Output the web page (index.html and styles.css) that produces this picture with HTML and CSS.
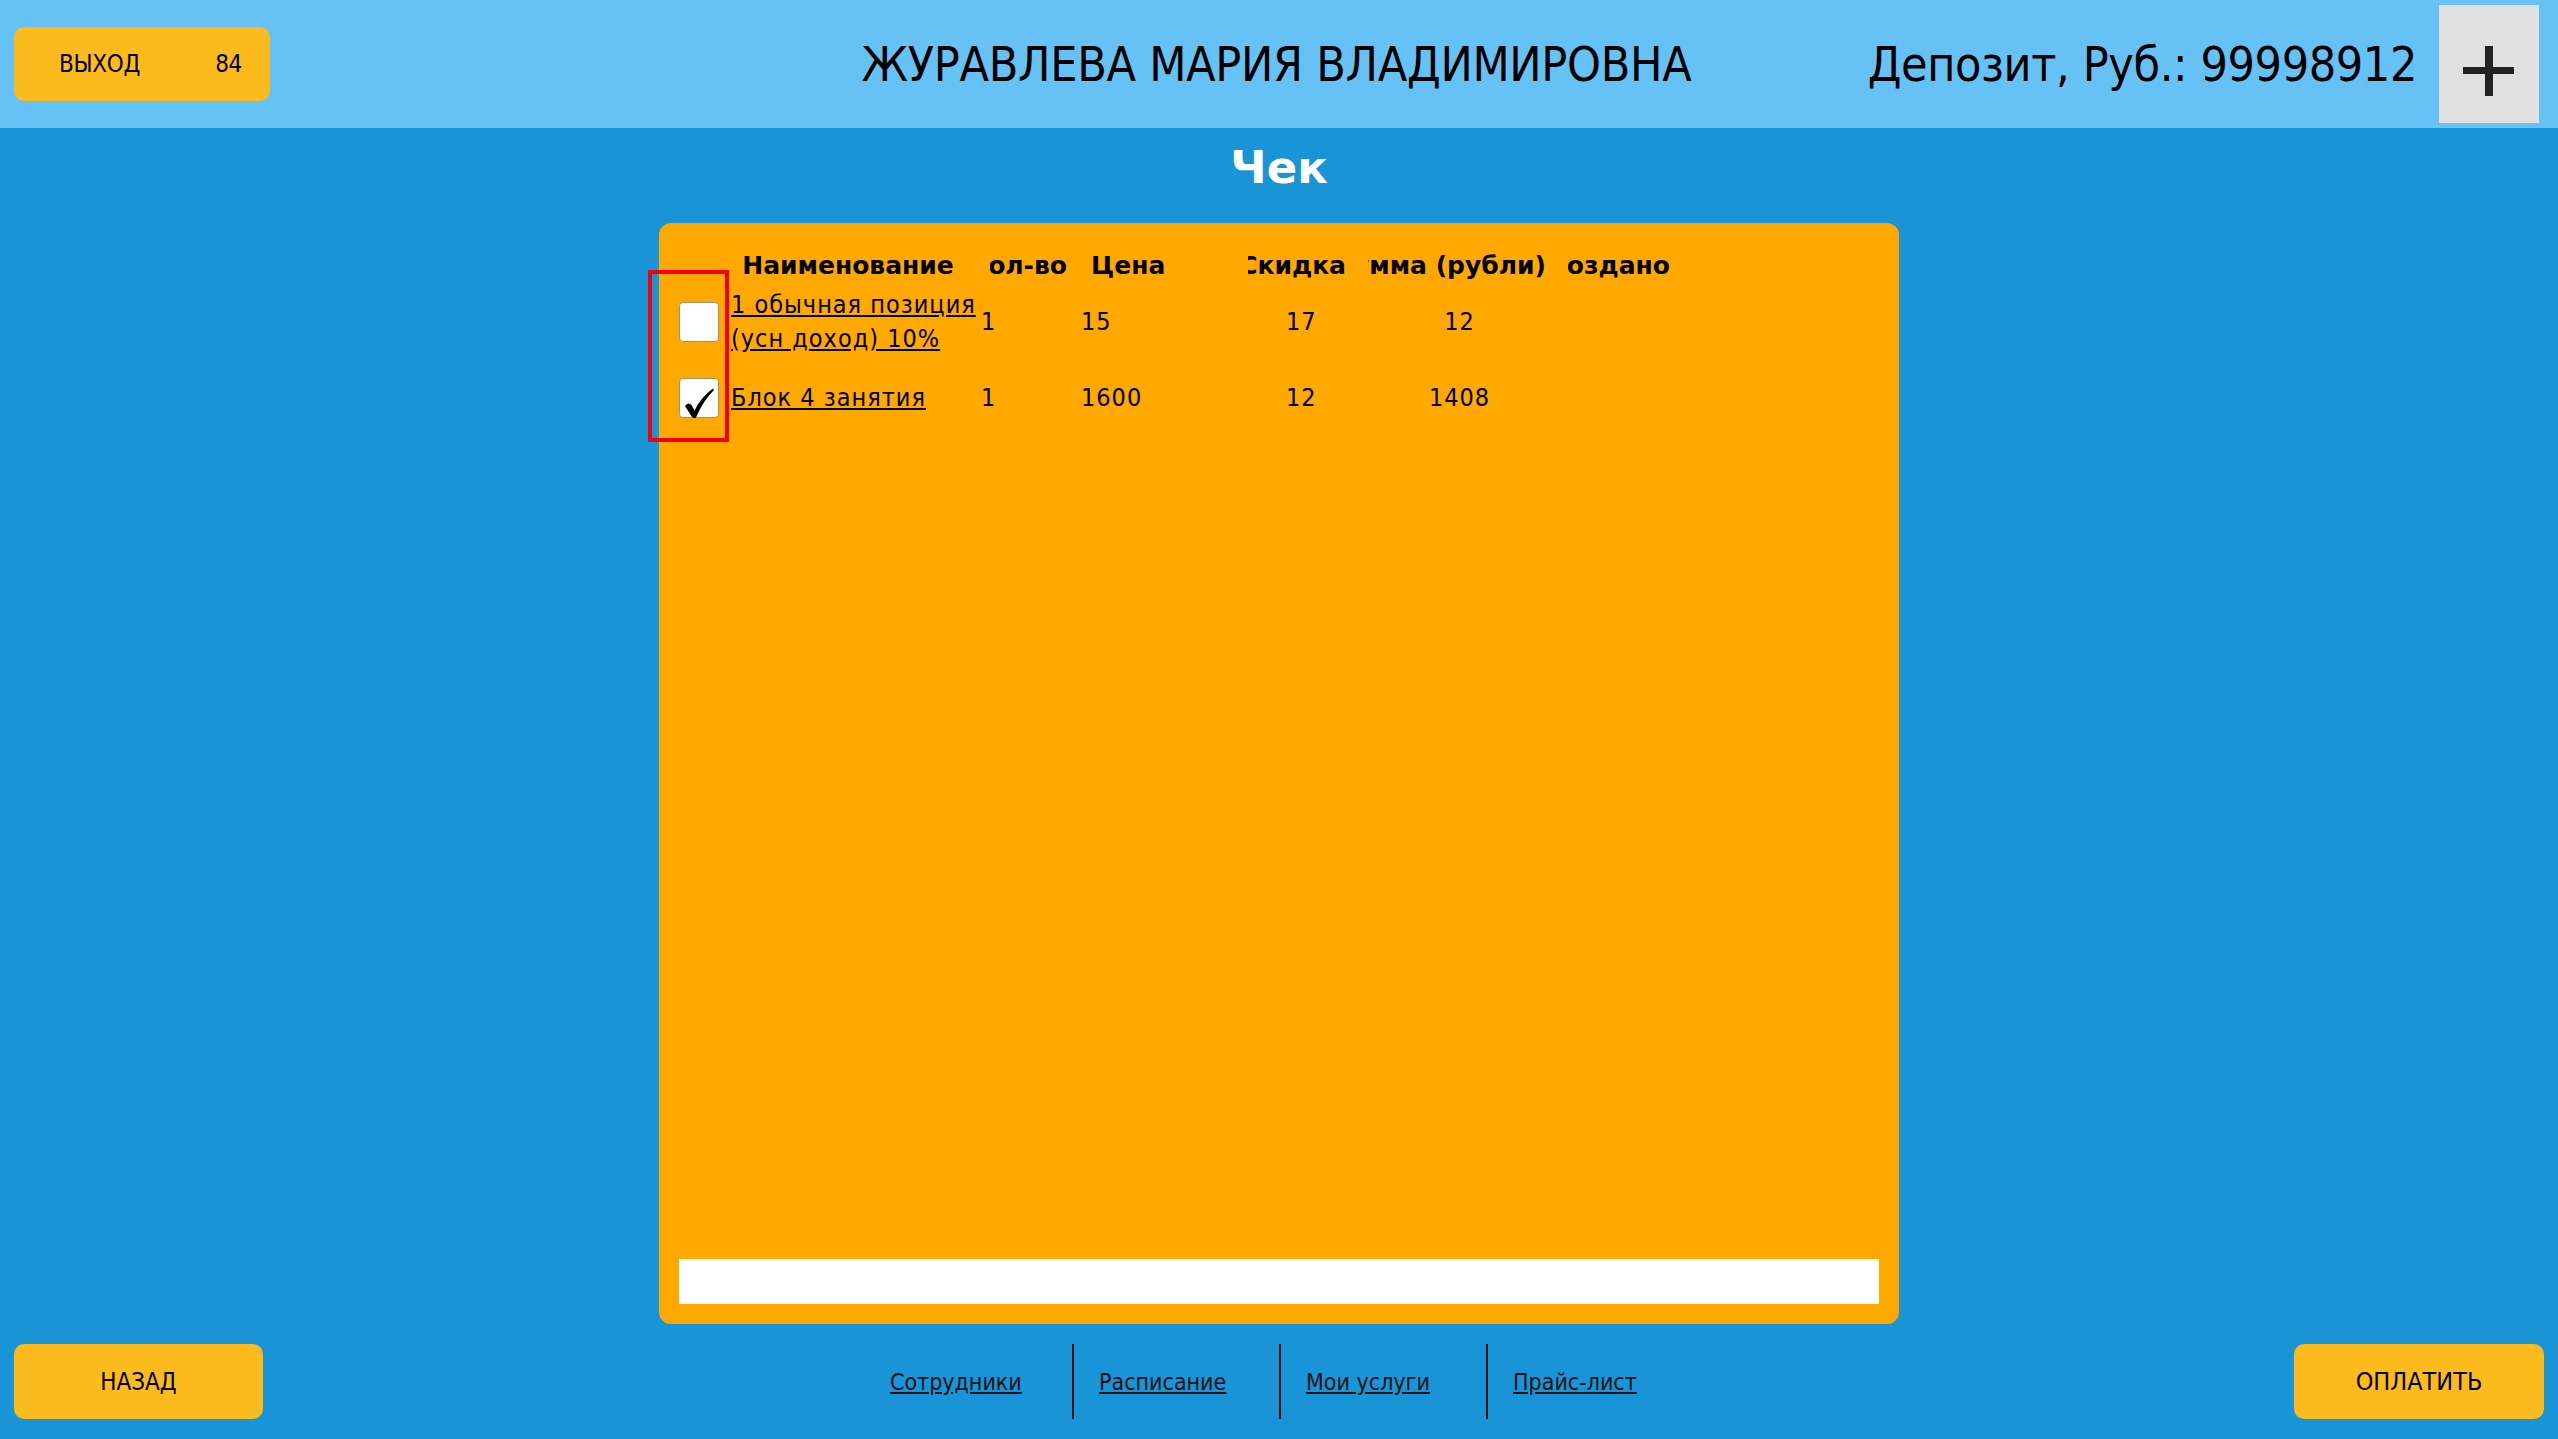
FILE: index.html
```html
<!DOCTYPE html>
<html lang="ru">
    <head>
        <meta charset="UTF-8">
        <meta name="viewport" content="width=device-width, initial-scale=1.0">
        <title>Чек</title>
        <link rel="stylesheet" href="styles.css">
    </head>
    <body>
        <header class="topbar">
            <button class="exit-btn"><span>ВЫХОД</span><span>84</span></button>
            <div class="client-name">ЖУРАВЛЕВА МАРИЯ ВЛАДИМИРОВНА</div>
            <div class="deposit">
                <span class="deposit-text">Депозит, Руб.: <span class="deposit-sum">99998912</span></span>
                <button class="add-btn" title="Пополнить">
                    <svg width="100" height="118" viewBox="0 0 100 118">
                        <rect x="24" y="62" width="51" height="7" fill="#222"/>
                        <rect x="46" y="41" width="8" height="50" fill="#222"/>
                    </svg>
                </button>
            </div>
        </header>

        <main class="content">
            <h1 class="title">Чек</h1>
            <div class="receipt">
                <div class="table">
                    <div class="row head">
                        <div></div>
                        <div class="th th-name">Наименование</div>
                        <div class="th th-qty"><span>Кол-во</span></div>
                        <div class="th th-price">Цена</div>
                        <div class="th th-disc"><span>Скидка</span></div>
                        <div class="th th-sum"><span>Сумма (рубли)</span></div>
                        <div class="th th-created"><span>Создано</span></div>
                    </div>
                    <div class="row item first">
                        <div><span class="check"></span></div>
                        <div class="td"><a href="#">1 обычная позиция (усн доход) 10%</a></div>
                        <div class="td">1</div>
                        <div class="td">15</div>
                        <div class="td td-disc">17</div>
                        <div class="td td-sum">12</div>
                        <div class="td"></div>
                    </div>
                    <div class="row item">
                        <div>
                            <span class="check">
                                <svg width="40" height="40" viewBox="0 0 40 40">
                                    <path d="M6 28 Q9 23.5 12.5 27 L15.5 32.5 Q22 19 34 10.5 L35 12 Q24 23 17.5 38.5 Q15.5 41.5 13 39 Z" fill="#000"/>
                                </svg>
                            </span>
                        </div>
                        <div class="td"><a href="#">Блок 4 занятия</a></div>
                        <div class="td">1</div>
                        <div class="td">1600</div>
                        <div class="td td-disc">12</div>
                        <div class="td td-sum">1408</div>
                        <div class="td"></div>
                    </div>
                    <div class="marker"></div>
                </div>
                <input type="text" class="comment">
            </div>
        </main>

        <footer class="bottombar">
            <div class="left"><button class="btn back-btn">НАЗАД</button></div>
            <nav class="links">
                <a href="#">Сотрудники</a>
                <a href="#">Расписание</a>
                <a href="#">Мои услуги</a>
                <a href="#">Прайс-лист</a>
            </nav>
            <div class="right"><button class="btn pay-btn">ОПЛАТИТЬ</button></div>
        </footer>
    </body>
</html>
```

FILE: styles.css
```css
body {
    margin: 0;
    height: 100vh;
    display: flex;
    flex-direction: column;
    background-color: #1994d6;
    font-family: "DejaVu Sans Condensed", "DejaVu Sans", sans-serif;
    font-stretch: condensed;
    color: #000;
    overflow: hidden;
}
button {
    font-family: inherit;
    font-stretch: inherit;
    color: #000;
    border: none;
    cursor: pointer;
}
a {
    color: #000;
}

/* top bar */
.topbar {
    height: 128px;
    flex-shrink: 0;
    box-sizing: border-box;
    display: grid;
    grid-template-columns: 1fr auto 1fr;
    align-items: center;
    padding: 0 19px 0 14px;
    background-color: #66c1f4;
}
.exit-btn {
    width: 256px;
    height: 74px;
    display: flex;
    justify-content: space-between;
    align-items: center;
    padding: 0 28px 0 45px;
    font-size: 24px;
    letter-spacing: -0.3px;
    background-color: #fbbb1c;
    border-radius: 10px;
}
.client-name {
    font-size: 48px;
    letter-spacing: -0.3px;
}
.deposit {
    display: flex;
    justify-content: flex-end;
    align-items: center;
}
.deposit-text {
    font-size: 48px;
    letter-spacing: -0.4px;
    margin-right: 22px;
}
.add-btn {
    width: 100px;
    height: 118px;
    padding: 0;
    background-color: #e0e0e0;
}
.add-btn svg {
    display: block;
}

/* main */
.content {
    flex: 1;
    min-height: 0;
    display: flex;
    flex-direction: column;
    align-items: center;
    padding-top: 14px;
}
.title {
    margin: 0 0 29px;
    font-family: "DejaVu Sans", sans-serif;
    font-stretch: normal;
    font-size: 45px;
    line-height: 52px;
    color: white;
}
.receipt {
    flex: 1;
    width: 1240px;
    box-sizing: border-box;
    display: flex;
    flex-direction: column;
    padding: 27px 20px 20px;
    background-color: #ffa800;
    border-radius: 12px;
}
.table {
    position: relative;
    flex: 1;
    font-size: 25px;
    line-height: 34px;
}
.row {
    display: grid;
    grid-template-columns: 52px 250px 100px 167px 118px 200px 1fr;
    align-items: center;
}
.row.head {
    line-height: 32px;
}
.row.first {
    margin-top: 6px;
}
.row.item + .row.item {
    margin-top: 22px;
}
.td {
    letter-spacing: 1px;
}
.th {
    font-family: "DejaVu Sans", sans-serif;
    font-stretch: normal;
    font-weight: bold;
    white-space: nowrap;
    overflow: hidden;
    display: flex;
}
.th-name {
    justify-content: center;
    padding-right: 16px;
}
.th-qty {
    justify-content: flex-end;
    margin: 0 14px 0 9px;
}
.th-price {
    padding-left: 10px;
}
.th-disc {
    justify-content: flex-end;
    margin-right: 20px;
}
.th-sum {
    justify-content: flex-end;
    margin: 0 20px 0 2px;
}
.th-created {
    justify-content: flex-end;
    width: 102px;
    margin-left: 2px;
}
.td-disc {
    padding-left: 38px;
}
.td-sum {
    text-align: center;
    padding-right: 13px;
}
.check {
    display: block;
    width: 40px;
    height: 40px;
    box-sizing: border-box;
    background-color: white;
    border: 1px solid #a8916a;
    border-radius: 4px;
}
.check svg {
    display: block;
    margin: -1px;
}
.marker {
    position: absolute;
    left: -31px;
    top: 20px;
    width: 81px;
    height: 172px;
    box-sizing: border-box;
    border: 4px solid #f5000a;
}
.comment {
    height: 45px;
    box-sizing: border-box;
    border: none;
    padding: 0 10px;
    font-size: 22px;
    background-color: white;
}

/* bottom bar */
.bottombar {
    flex-shrink: 0;
    display: grid;
    grid-template-columns: 1fr auto 1fr;
    align-items: center;
    padding: 20px 14px;
}
.right {
    display: flex;
    justify-content: flex-end;
}
.btn {
    height: 75px;
    font-size: 25px;
    background-color: #fbbb1c;
    border-radius: 10px;
}
.back-btn {
    width: 249px;
    font-size: 24px;
}
.pay-btn {
    width: 250px;
}
.links {
    display: flex;
    height: 75px;
}
.links a {
    width: 207px;
    box-sizing: border-box;
    display: flex;
    align-items: center;
    padding-left: 25px;
    font-size: 23px;
    color: #111;
}
.links a + a {
    border-left: 2px solid #111;
}
```
